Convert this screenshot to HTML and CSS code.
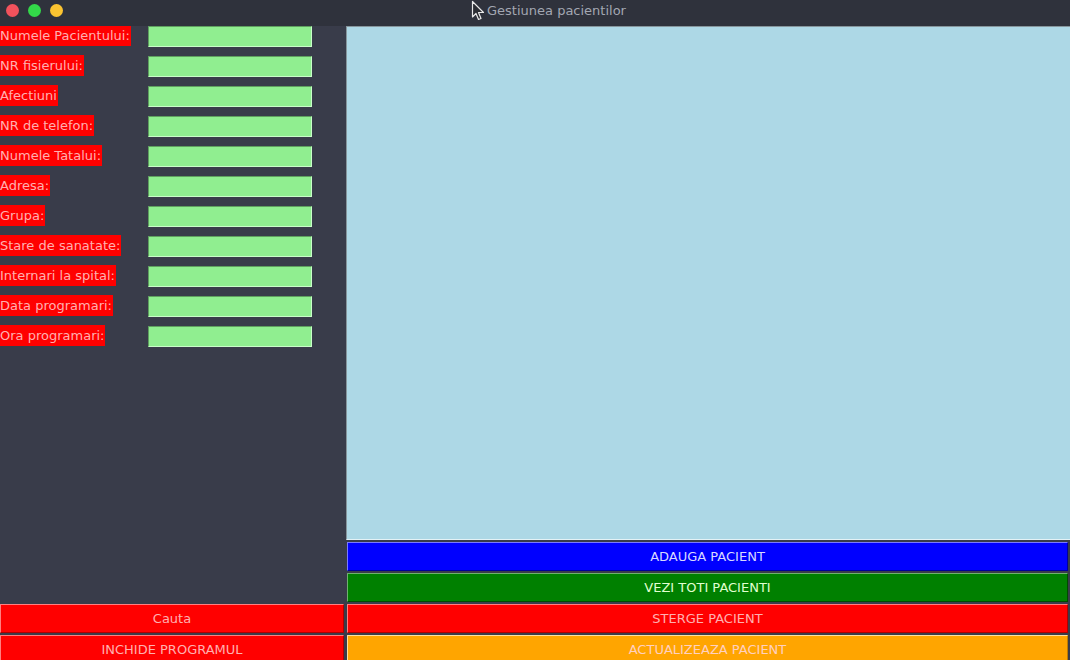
FILE: index.html
```html
<!DOCTYPE html>
<html lang="ro">
<head>
<meta charset="utf-8">
<title>Gestiunea pacientilor</title>
<link rel="stylesheet" href="styles.css">
</head>
<body>
<div class="window">
  <header class="titlebar">
    <div class="lights">
      <span class="light red"></span>
      <span class="light green"></span>
      <span class="light yellow"></span>
    </div>
    <div class="title">
      <svg class="cursor" width="14" height="22" viewBox="0 0 14 22"><path d="M1.5 1.5 L1.5 17 L5 13.5 L7.5 19.5 L10 18.5 L7.5 12.5 L12.5 12.5 Z" fill="#2b2d33" stroke="#e8e8e8" stroke-width="1.2" stroke-linejoin="round"/></svg>
      <span>Gestiunea pacientilor</span>
    </div>
  </header>
  <main class="main">
    <section class="left">
      <form class="form">
        <div class="row"><span class="label">Numele Pacientului:</span><input class="field" type="text"></div>
        <div class="row"><span class="label">NR fisierului:</span><input class="field" type="text"></div>
        <div class="row"><span class="label">Afectiuni</span><input class="field" type="text"></div>
        <div class="row"><span class="label">NR de telefon:</span><input class="field" type="text"></div>
        <div class="row"><span class="label">Numele Tatalui:</span><input class="field" type="text"></div>
        <div class="row"><span class="label">Adresa:</span><input class="field" type="text"></div>
        <div class="row"><span class="label">Grupa:</span><input class="field" type="text"></div>
        <div class="row"><span class="label">Stare de sanatate:</span><input class="field" type="text"></div>
        <div class="row"><span class="label">Internari la spital:</span><input class="field" type="text"></div>
        <div class="row"><span class="label">Data programari:</span><input class="field" type="text"></div>
        <div class="row"><span class="label">Ora programari:</span><input class="field" type="text"></div>
      </form>
      <div class="buttons left-buttons">
        <button class="btn btn-red">Cauta</button>
        <button class="btn btn-red">INCHIDE PROGRAMUL</button>
      </div>
    </section>
    <section class="right">
      <div class="panel"></div>
      <div class="buttons right-buttons">
        <button class="btn btn-blue">ADAUGA PACIENT</button>
        <button class="btn btn-green">VEZI TOTI PACIENTI</button>
        <button class="btn btn-red">STERGE PACIENT</button>
        <button class="btn btn-orange">ACTUALIZEAZA PACIENT</button>
      </div>
    </section>
  </main>
</div>
</body>
</html>
```

FILE: styles.css
```css
* { box-sizing: border-box; }

html, body {
  margin: 0;
  padding: 0;
  width: 1070px;
  height: 660px;
  overflow: hidden;
  background: #393c4a;
  font-family: "DejaVu Sans", "Liberation Sans", sans-serif;
}

.window {
  display: flex;
  flex-direction: column;
  width: 1070px;
}

.titlebar {
  height: 26px;
  background: #2f323c;
  display: flex;
  align-items: center;
  position: relative;
}

.lights {
  display: flex;
  gap: 9px;
  padding-left: 6px;
  margin-top: -6px;
}

.light {
  width: 13px;
  height: 13px;
  border-radius: 50%;
  display: block;
}
.light.red { background: #f2525c; }
.light.green { background: #33d849; }
.light.yellow { background: #fbc431; }

.title {
  position: absolute;
  left: 471px;
  top: 0;
  display: flex;
  align-items: flex-start;
  gap: 2px;
  color: #a3a7b2;
  font-size: 13px;
  line-height: 22px;
}
.cursor { display: block; margin-top: 0; }

.main {
  display: flex;
  height: 638px;
}

.left {
  width: 346px;
  display: flex;
  flex-direction: column;
  justify-content: space-between;
}

.form {
  display: flex;
  flex-direction: column;
  gap: 9px;
  margin: -1px 0 0 0;
}

.row {
  display: grid;
  grid-template-columns: 148px 164px;
  align-items: start;
  height: 21px;
}

.label {
  justify-self: start;
  background: #ff0000;
  color: #ffb0b0;
  font-size: 13px;
  line-height: 21px;
  height: 21px;
  padding-right: 1px;
  white-space: nowrap;
}

.field {
  margin: 1px 0 0 0;
  width: 164px;
  height: 21px;
  background: #90ee90;
  border: 1px solid;
  border-color: #5f9f5f #c8ffc8 #c8ffc8 #5f9f5f;
  padding: 0;
  outline: none;
}

.buttons {
  display: flex;
  flex-direction: column;
  gap: 2px;
}

.left-buttons {
  width: 344px;
}

.right {
  flex: 1;
  display: flex;
  flex-direction: column;
}

.panel {
  height: 514px;
  background: #add8e6;
  border-left: 1px solid #87969c;
  border-top: 1px solid #87969c;
  border-bottom: 1px solid #e4f2f6;
  margin-bottom: 2px;
}

.right-buttons {
  padding-left: 1px;
  padding-right: 2px;
}

.btn {
  height: 29px;
  width: 100%;
  margin: 0;
  padding: 0;
  font-family: "DejaVu Sans", "Liberation Sans", sans-serif;
  font-size: 13px;
  color: #ffb0b0;
  border: 1px solid;
  text-align: center;
  cursor: default;
}

.btn-red {
  background: #ff0000;
  border-color: #ff8080 #b00000 #b00000 #ff8080;
}
.btn-blue {
  background: #0000ff;
  border-color: #7a7aff #00009a #00009a #7a7aff;
  color: #d8d8ff;
}
.btn-green {
  background: #008000;
  border-color: #70b070 #004a00 #004a00 #70b070;
  color: #e0ffd0;
}
.btn-orange {
  background: #ffa500;
  border-color: #ffe0a0 #c07c00 #c07c00 #ffe0a0;
  color: #ffd0c0;
}
```
